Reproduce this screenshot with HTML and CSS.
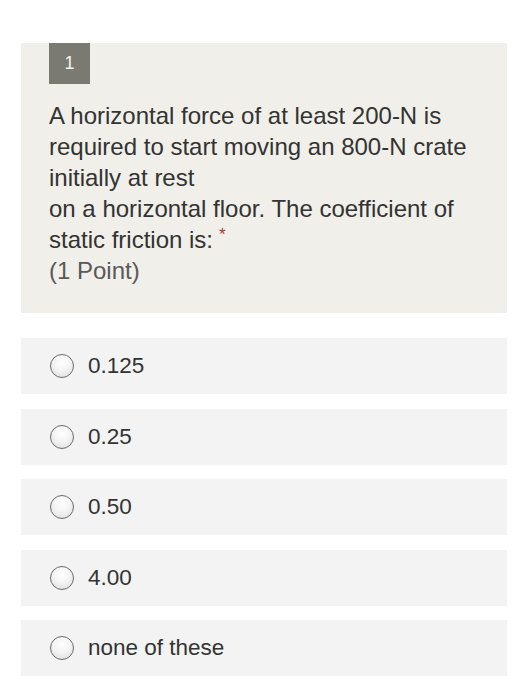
FILE: index.html
```html
<!DOCTYPE html>
<html>
<head>
<meta charset="utf-8">
<link rel="stylesheet" href="styles.css">
</head>
<body>
<div class="page">
  <div class="question">
    <div class="badge">1</div>
    <div class="qtext">A horizontal force of at least 200-N is required to start moving an 800-N crate initially at rest<br>on a horizontal floor. The coefficient of static friction is:<span class="req">*</span></div>
    <div class="points">(1 Point)</div>
  </div>
  <div class="options">
    <label class="option"><span class="radio"></span><span class="label">0.125</span></label>
    <label class="option"><span class="radio"></span><span class="label">0.25</span></label>
    <label class="option"><span class="radio"></span><span class="label">0.50</span></label>
    <label class="option"><span class="radio"></span><span class="label">4.00</span></label>
    <label class="option"><span class="radio"></span><span class="label">none of these</span></label>
  </div>
</div>
</body>
</html>
```
FILE: styles.css
```css
html, body {
  margin: 0;
  padding: 0;
  background: #ffffff;
}
body {
  font-family: "Liberation Sans", Arial, Helvetica, sans-serif;
  color: #333333;
}
.page {
  padding: 43px 21px 0 21px;
}
.question {
  background: #f0efe9;
  padding: 0 28px 27px 28px;
}
.badge {
  width: 41px;
  height: 41px;
  background: #7a7a73;
  color: #f2f2f2;
  font-size: 18px;
  display: flex;
  align-items: center;
  justify-content: center;
}
.qtext {
  margin-top: 16px;
  font-size: 24px;
  line-height: 31px;
  color: #333333;
}
.req {
  display: inline-block;
  color: #a4373a;
  font-size: 17px;
  line-height: 14px;
  vertical-align: 8px;
  margin-left: 6px;
}
.points {
  font-size: 24px;
  line-height: 31px;
  color: #595959;
}
.options {
  margin-top: 25px;
  display: flex;
  flex-direction: column;
  gap: 14.5px;
}
.option {
  height: 56px;
  background: #f3f3f3;
  display: flex;
  align-items: center;
  padding-left: 29px;
}
.radio {
  width: 22px;
  height: 22px;
  border: 1.5px solid #6b6b6b;
  border-radius: 50%;
  background: radial-gradient(circle at 50% 35%, #ffffff 0%, #f4f4f4 45%, #d9d9d9 100%);
  flex: none;
}
.label {
  margin-left: 14px;
  font-size: 22.5px;
  color: #333333;
}
```
